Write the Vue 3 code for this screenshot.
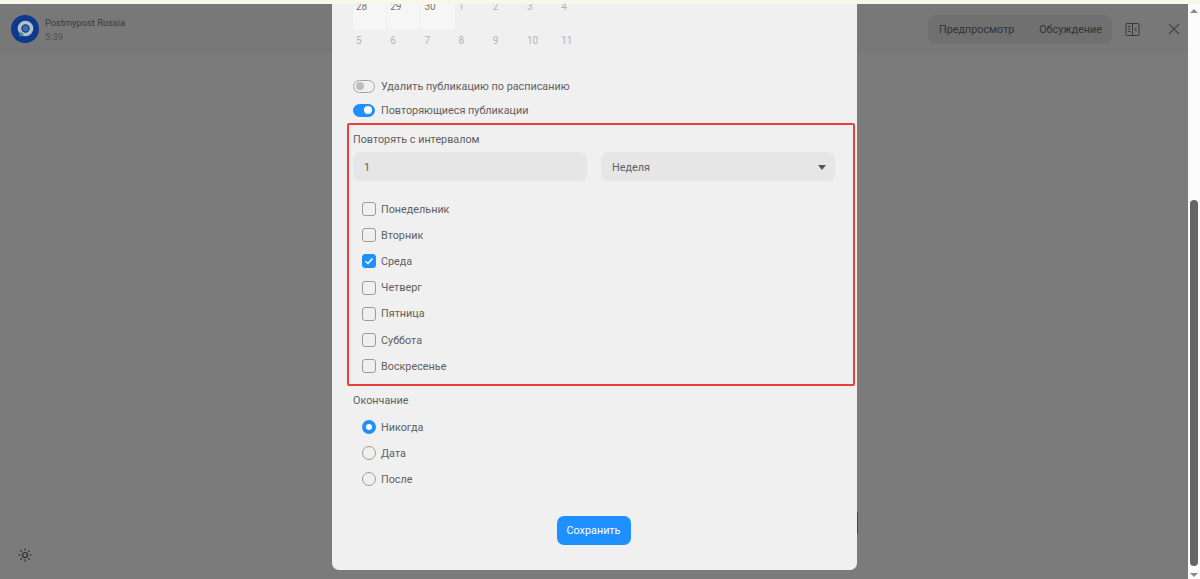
<script setup>
const firstWeek = ['28', '29', '30', '1', '2', '3', '4']
const secondWeek = ['5', '6', '7', '8', '9', '10', '11']
const days = [
  { name: 'Понедельник', checked: false },
  { name: 'Вторник', checked: false },
  { name: 'Среда', checked: true },
  { name: 'Четверг', checked: false },
  { name: 'Пятница', checked: false },
  { name: 'Суббота', checked: false },
  { name: 'Воскресенье', checked: false }
]
const endings = [
  { name: 'Никогда', checked: true },
  { name: 'Дата', checked: false },
  { name: 'После', checked: false }
]
</script>

<template>
  <div class="page">
    <div class="top-strip"></div>
    <div class="window">
      <div class="main">
        <header class="header">
          <div class="account">
            <svg class="avatar" width="28" height="28" viewBox="0 0 28 28">
              <circle cx="14" cy="14" r="14" fill="#0d3a8c" />
              <circle cx="14.500" cy="13.500" r="3" fill="#3f6fa0" />
              <circle cx="14.500" cy="13.500" r="6" fill="none" stroke="#b4bece" stroke-width="3.600" />
              <path d="M8.500 16.500l0 5.500 4.500-2.500z" fill="#3f8f86" />
            </svg>
            <div class="account-text">
              <div class="account-name">Postmypost Russia</div>
              <div class="account-time">5:39</div>
            </div>
          </div>
          <div class="actions">
            <div class="tabs">
              <span>Предпросмотр</span>
              <span>Обсуждение</span>
            </div>
            <svg class="panel-icon" width="15" height="15" viewBox="0 0 15 15" fill="none" stroke="#3a3a3a" stroke-width="1">
              <rect x="1" y="1.500" width="13" height="12" rx="1" />
              <path d="M7.500 1.500v12M3 4.500h2.500M3 7h2.500M3 9.500h2.500M11.500 5.500L9.800 7.500l1.700 2" />
            </svg>
            <svg class="close-icon" width="12" height="12" viewBox="0 0 12 12" fill="none" stroke="#444" stroke-width="1.100">
              <path d="M1 1l10 10M11 1L1 11" />
            </svg>
          </div>
        </header>

        <svg class="theme-icon" width="14" height="14" viewBox="0 0 14 14" fill="none" stroke="#2e2e2e" stroke-width="1.200">
          <circle cx="7" cy="7" r="2.500" />
          <path d="M7 .5v2M7 11.500v2M.5 7h2M11.500 7h2M2.400 2.400l1.400 1.400M10.200 10.200l1.400 1.400M2.400 11.600l1.400-1.400M10.200 3.800l1.400-1.400" />
        </svg>

        <div class="modal">
          <div class="calendar">
            <div class="week week-first">
              <div v-for="(day, i) in firstWeek" :key="day" class="cell" :class="{ active: i < 3 }">{{ day }}</div>
            </div>
            <div class="week">
              <div v-for="day in secondWeek" :key="day" class="cell">{{ day }}</div>
            </div>
          </div>

          <div class="switches">
            <div class="switch-row">
              <span class="switch"><i></i></span>
              <span>Удалить публикацию по расписанию</span>
            </div>
            <div class="switch-row">
              <span class="switch on"><i></i></span>
              <span>Повторяющиеся публикации</span>
            </div>
          </div>

          <section class="repeat-box">
            <div class="field-label">Повторять с интервалом</div>
            <div class="fields">
              <div class="field">1</div>
              <div class="field">
                Неделя
                <span class="caret"></span>
              </div>
            </div>
            <div class="options day-options">
              <div v-for="day in days" :key="day.name" class="option">
                <span class="checkbox" :class="{ checked: day.checked }">
                  <svg v-if="day.checked" width="10" height="10" viewBox="0 0 10 10" fill="none" stroke="#fff" stroke-width="1.500">
                    <path d="M1.500 5.200l2.500 2.300 4.500-5" />
                  </svg>
                </span>
                <span>{{ day.name }}</span>
              </div>
            </div>
          </section>

          <div class="ending">
            <div class="field-label">Окончание</div>
            <div class="options">
              <div v-for="item in endings" :key="item.name" class="option">
                <span class="radio" :class="{ checked: item.checked }"></span>
                <span>{{ item.name }}</span>
              </div>
            </div>
          </div>

          <div class="footer">
            <button class="save" type="button">Сохранить</button>
          </div>
        </div>
        <span class="edge-mark"></span>
      </div>

      <div class="scrollbar">
        <span class="arrow up"></span>
        <span class="thumb"></span>
        <span class="arrow down"></span>
      </div>
    </div>
  </div>
</template>

<style>
html,
body {
  margin: 0;
  overflow: hidden;
}
</style>

<style scoped>
.page {
  width: 1200px;
  height: 579px;
  display: flex;
  flex-direction: column;
  overflow: hidden;
  font-family: Roboto, "Liberation Sans", sans-serif;
  font-size: 10.800px;
  color: #606060;
}

.top-strip {
  height: 4px;
  flex: none;
  background: #f7f7ea;
}

.window {
  flex: 1;
  display: flex;
  min-height: 0;
}

.main {
  flex: 1;
  position: relative;
  background: #7b7b7b;
  min-width: 0;
}

.header {
  height: 50px;
  display: flex;
  justify-content: space-between;
  align-items: center;
  padding: 0 8px 0 11px;
  background: #787878;
}

.account {
  display: flex;
  align-items: center;
  gap: 6px;
}

.avatar {
  display: block;
}

.account-text {
  margin-top: 2px;
  line-height: 14px;
  font-size: 9.300px;
}

.account-name {
  color: #3a3a3a;
}

.account-time {
  color: #4f4f4f;
}

.actions {
  display: flex;
  align-items: center;
}

.tabs {
  height: 29px;
  width: 184px;
  box-sizing: border-box;
  padding: 1px 10px 0 11px;
  display: flex;
  justify-content: space-between;
  align-items: center;
  background: #707070;
  border-radius: 8px;
  color: #333;
}

.panel-icon {
  margin-left: 13px;
}

.close-icon {
  margin-left: 28px;
}

.theme-icon {
  position: absolute;
  left: 18px;
  top: 544px;
}

.edge-mark {
  position: absolute;
  left: 857px;
  top: 508px;
  width: 1px;
  height: 22px;
  background: #4a4058;
}

.modal {
  position: absolute;
  left: 332px;
  top: 0;
  width: 525px;
  height: 566px;
  box-sizing: border-box;
  padding: 0 21px;
  background: #f0f0f0;
  border-radius: 0 0 7px 7px;
  overflow: hidden;
}

.week {
  display: flex;
  height: 26px;
}

.cell {
  width: 34.200px;
  padding-left: 3px;
  box-sizing: border-box;
  color: #b4b4b4;
  font-size: 10px;
  line-height: 22px;
}

.week-first .cell {
  margin-top: -8px;
  height: 34px;
}

.cell.active {
  background: #f6f6f6;
  border-right: 1px solid #f0f0f0;
  border-radius: 4px;
  color: #757575;
}

.switches {
  margin-top: 21px;
  display: flex;
  flex-direction: column;
  gap: 6px;
}

.switch-row {
  height: 18px;
  display: flex;
  align-items: center;
  gap: 6px;
}

.switch {
  width: 22px;
  height: 13px;
  box-sizing: border-box;
  padding: 2px;
  border: 1px solid #a3a3a3;
  border-radius: 7px;
  display: flex;
  align-items: center;
}

.switch i {
  width: 8px;
  height: 8px;
  border-radius: 50%;
  background: #bdbdbd;
}

.switch.on {
  background: #1e90ff;
  border-color: #1e90ff;
  justify-content: flex-end;
}

.switch.on i {
  background: #fff;
}

.repeat-box {
  margin: 4px -19px 0 -6px;
  height: 263px;
  box-sizing: border-box;
  padding: 7px 18px 0 4px;
  border: 2px solid #e8403a;
  border-radius: 2px;
}

.field-label {
  line-height: 16px;
}

.fields {
  margin-top: 4px;
  display: flex;
  gap: 14px;
}

.field {
  flex: 1;
  height: 29px;
  box-sizing: border-box;
  padding: 2px 11px 0;
  display: flex;
  align-items: center;
  justify-content: space-between;
  background: #e6e6e6;
  border-radius: 7px;
}

.caret {
  width: 0;
  height: 0;
  border-left: 4.500px solid transparent;
  border-right: 4.500px solid transparent;
  border-top: 5px solid #555;
  margin-right: -2px;
}

.options {
  padding-left: 9px;
  margin-top: 5px;
}

.day-options {
  margin-top: 15px;
}

.option {
  height: 26.200px;
  display: flex;
  align-items: center;
  gap: 5px;
}

.checkbox {
  width: 14px;
  height: 14px;
  box-sizing: border-box;
  border: 1px solid #9c9c9c;
  border-radius: 3px;
  display: flex;
  align-items: center;
  justify-content: center;
}

.checkbox.checked {
  background: #1e90ff;
  border-color: #1e90ff;
}

.radio {
  width: 14px;
  height: 14px;
  box-sizing: border-box;
  border: 1px solid #9c9c9c;
  border-radius: 50%;
}

.radio.checked {
  border: 4px solid #1e90ff;
  background: #fff;
}

.ending {
  margin-top: 7px;
}

.footer {
  margin-top: 23px;
  padding-right: 2px;
  display: flex;
  justify-content: center;
}

.save {
  width: 74px;
  height: 29px;
  padding: 1px 0 0;
  border: 0;
  border-radius: 7px;
  background: #1e90ff;
  color: #fff;
  font: inherit;
}

.scrollbar {
  width: 12px;
  flex: none;
  background: #fbfbfb;
  position: relative;
}

.thumb {
  position: absolute;
  top: 196px;
  left: 2px;
  width: 8px;
  height: 366px;
  border-radius: 4px;
  background: #656565;
}

.arrow {
  position: absolute;
  left: 2px;
  width: 0;
  height: 0;
  border-left: 4px solid transparent;
  border-right: 4px solid transparent;
}

.arrow.up {
  top: 5px;
  border-bottom: 4px solid #8c8c8c;
}

.arrow.down {
  bottom: 2px;
  border-top: 4px solid #8c8c8c;
}
</style>
